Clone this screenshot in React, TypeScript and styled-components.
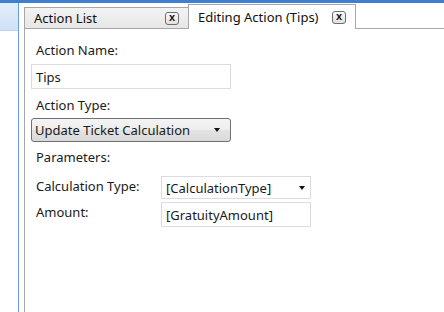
import React from "react";
import styled, { createGlobalStyle } from "styled-components";

const GlobalStyle = createGlobalStyle`
  html, body {
    margin: 0;
    padding: 0;
    background: #ffffff;
  }
  body {
    font-family: "Noto Sans", "Open Sans", sans-serif;
    font-size: 13px;
    color: #1a1a1a;
  }
`;

const Screen = styled.div`
  width: 444px;
  height: 312px;
  display: flex;
  flex-direction: column;
  overflow: hidden;
`;

const TopBar = styled.div`
  height: 3px;
  background: #3e7fd0;
  flex-shrink: 0;
`;

const Body = styled.div`
  flex: 1;
  display: flex;
`;

const SidePanel = styled.div`
  width: 18px;
  border-right: 1px solid #6a9ae0;
  display: flex;
  flex-direction: column;
`;

const SideHeader = styled.div`
  height: 27px;
  background: linear-gradient(to bottom, #e4eefb, #cfe0f6);
  border-bottom: 1px solid #bcd2f0;
`;

const Main = styled.div`
  flex: 1;
  margin-left: 5px;
  display: flex;
  flex-direction: column;
`;

const TabStrip = styled.div`
  height: 26px;
  display: flex;
  align-items: flex-end;
`;

const Tab = styled.div<{ $active?: boolean }>`
  height: ${(p) => (p.$active ? "25px" : "22px")};
  box-sizing: border-box;
  display: flex;
  align-items: center;
  justify-content: space-between;
  padding: 0 9px;
  border: 1px solid #a7a7a7;
  border-bottom: ${(p) => (p.$active ? "none" : "1px solid #a7a7a7")};
  border-right: ${(p) => (p.$active ? "1px solid #a7a7a7" : "none")};
  background: ${(p) =>
    p.$active ? "#ffffff" : "linear-gradient(to bottom, #f3f3f3, #e6e6e6)"};
  width: ${(p) => (p.$active ? "168px" : "164px")};
  font-size: 13px;
  color: #111;
`;

const CloseBox = styled.div`
  width: 14px;
  height: 13px;
  box-sizing: border-box;
  border: 1px solid #6e6e6e;
  border-radius: 3px;
  background: linear-gradient(to bottom, #fbfbfb, #e0e0e0);
  display: flex;
  align-items: center;
  justify-content: center;
  font-family: "Liberation Sans", Arial, sans-serif;
  font-weight: bold;
  font-size: 11px;
  line-height: 1;
  color: #111;
  padding-bottom: 2px;
`;

const TabFill = styled.div`
  flex: 1;
  align-self: stretch;
  border-bottom: 1px solid #a7a7a7;
`;

const Content = styled.div`
  flex: 1;
  border-left: 1px solid #a7a7a7;
  padding: 11px 0 0 6px;
  display: flex;
  flex-direction: column;
  align-items: flex-start;
`;

const Label = styled.div`
  padding-left: 5px;
  height: 20px;
  line-height: 20px;
  color: #1a1a1a;
`;

const TextBox = styled.div<{ $width: number }>`
  width: ${(p) => p.$width}px;
  height: 25px;
  box-sizing: border-box;
  border: 1px solid #dcdcdc;
  padding: 0 4px;
  display: flex;
  align-items: center;
  background: #fff;
  margin: 4px 0 6px;
`;

const DropButton = styled.div`
  width: 200px;
  height: 24px;
  box-sizing: border-box;
  border: 1px solid #707070;
  border-radius: 3px;
  background: linear-gradient(to bottom, #f4f4f4 0%, #ededed 50%, #e3e3e3 51%, #d9d9d9 100%);
  display: flex;
  align-items: center;
  justify-content: space-between;
  padding: 0 10px 0 3px;
  margin: 3px 0 5px;
`;

const Arrow = styled.span`
  width: 0;
  height: 0;
  border-left: 3.5px solid transparent;
  border-right: 3.5px solid transparent;
  border-top: 4px solid #111;
`;

const ParamGrid = styled.div`
  display: grid;
  grid-template-columns: 130px 150px;
  row-gap: 3px;
  align-items: start;
  margin-top: 9px;
`;

const ParamLabel = styled.div`
  padding-left: 5px;
  line-height: 20px;
`;

const FlatCombo = styled.div`
  height: 23px;
  box-sizing: border-box;
  border: 1px solid #dcdcdc;
  display: flex;
  align-items: center;
  justify-content: space-between;
  padding: 0 5px 0 4px;
`;

const FlatBox = styled(FlatCombo)`
  height: 25px;
`;

export default function App() {
  return (
    <>
      <GlobalStyle />
      <Screen>
        <TopBar />
        <Body>
          <SidePanel>
            <SideHeader />
          </SidePanel>
          <Main>
            <TabStrip>
              <Tab>
                <span>Action List</span>
                <CloseBox>x</CloseBox>
              </Tab>
              <Tab $active>
                <span>Editing Action (Tips)</span>
                <CloseBox>x</CloseBox>
              </Tab>
              <TabFill />
            </TabStrip>
            <Content>
              <Label>Action Name:</Label>
              <TextBox $width={200}>Tips</TextBox>
              <Label>Action Type:</Label>
              <DropButton>
                <span>Update Ticket Calculation</span>
                <Arrow />
              </DropButton>
              <Label>Parameters:</Label>
              <ParamGrid>
                <ParamLabel>Calculation Type:</ParamLabel>
                <FlatCombo>
                  <span>[CalculationType]</span>
                  <Arrow />
                </FlatCombo>
                <ParamLabel>Amount:</ParamLabel>
                <FlatBox>[GratuityAmount]</FlatBox>
              </ParamGrid>
            </Content>
          </Main>
        </Body>
      </Screen>
    </>
  );
}
